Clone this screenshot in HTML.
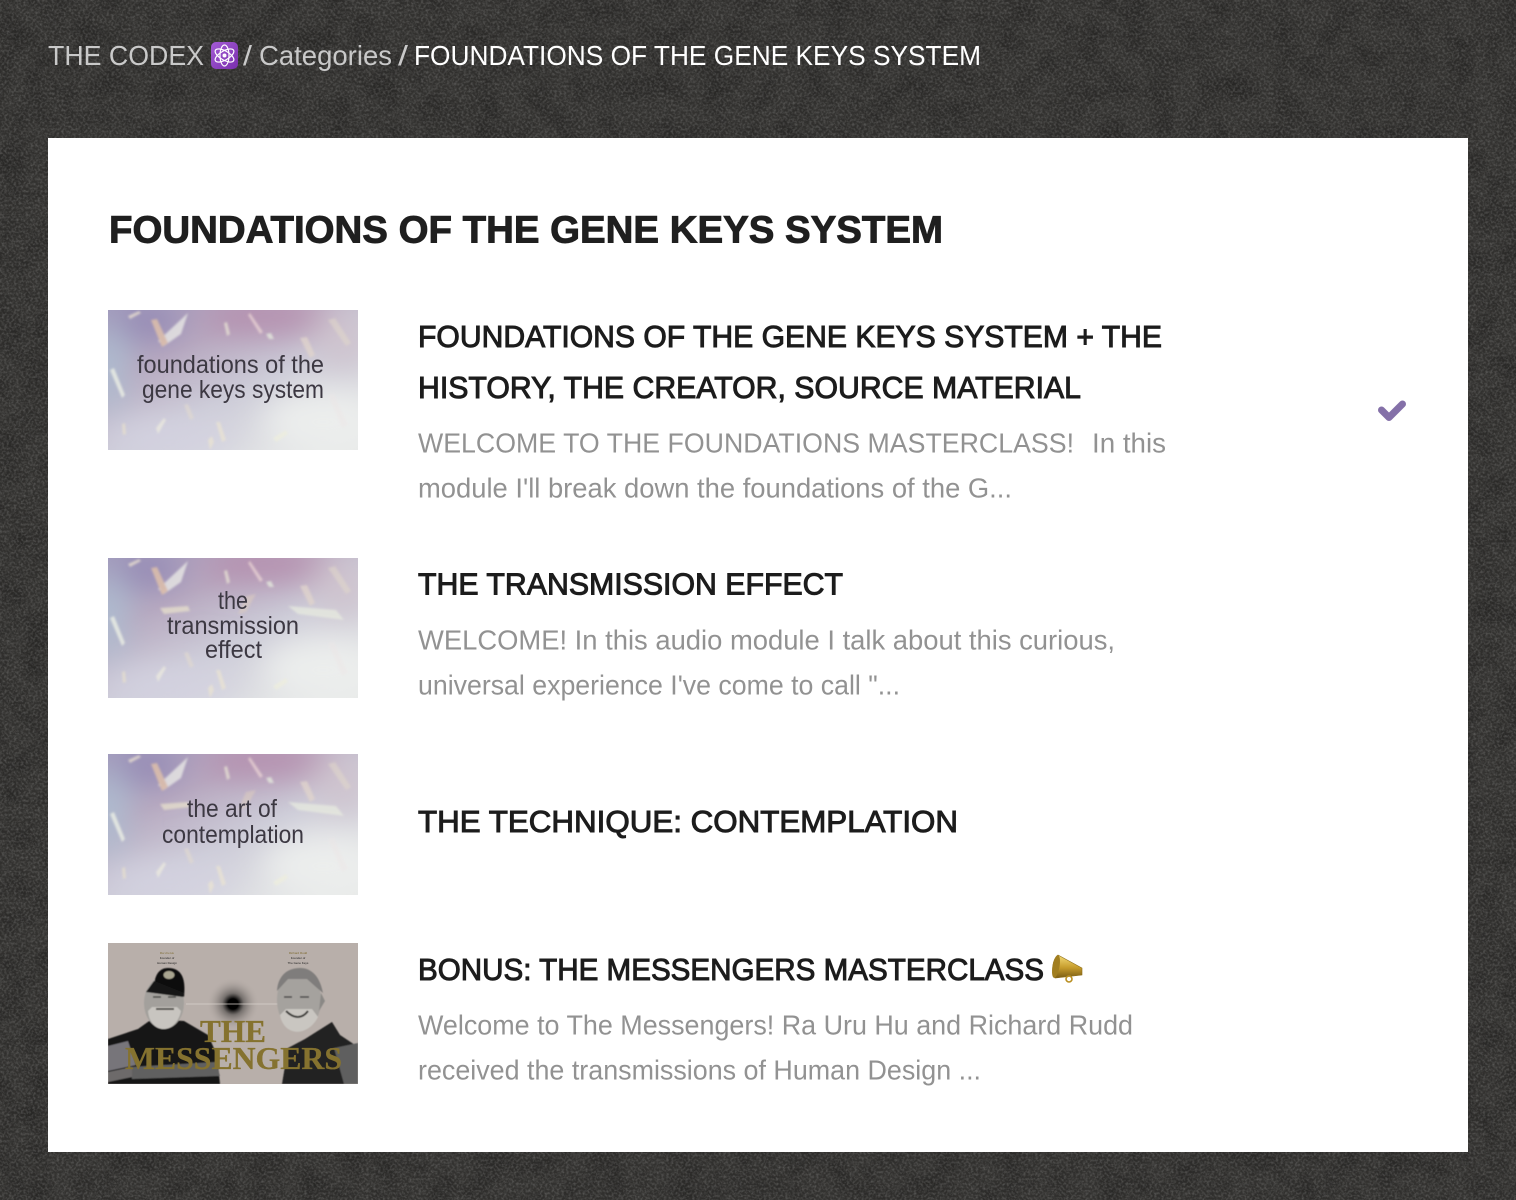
<!DOCTYPE html>
<html lang="en"><head><meta charset="utf-8"><title>FOUNDATIONS OF THE GENE KEYS SYSTEM</title>
<style>
html,body{margin:0;padding:0;width:1516px;height:1200px;overflow:hidden;background:#383735}
svg{display:block}
text{font-family:"Liberation Sans",sans-serif}
.bc{font-size:28px;fill:#c9c9c9}
.bw{font-size:28px;fill:#fff}
.h{font-size:38px;font-weight:700;fill:#1f1f1f;stroke:#1f1f1f;stroke-width:.9px}
.t{font-size:31px;fill:#1c1c1c;stroke:#1c1c1c;stroke-width:1px}
.d{font-size:28px;fill:#929292}
.tt{font-size:25px;fill:#3c3842}
.g{font-family:"Liberation Serif",serif;font-weight:700;fill:#85722f;stroke:#85722f;stroke-width:.3px}
</style></head><body>
<svg xmlns="http://www.w3.org/2000/svg" width="1516" height="1200" viewBox="0 0 1516 1200">
<defs>
<filter id="noise" x="0" y="0" width="100%" height="100%">
<feTurbulence type="fractalNoise" baseFrequency="0.42" numOctaves="2" seed="7"/>
<feColorMatrix type="matrix" values="0 0 0 0 .5  0 0 0 0 .5  0 0 0 0 .49  1.1 0 0 0 -.42"/>
</filter>
<filter id="dark" x="0" y="0" width="100%" height="100%">
<feTurbulence type="fractalNoise" baseFrequency="0.04" numOctaves="2" seed="3"/>
<feColorMatrix type="matrix" values="0 0 0 0 0  0 0 0 0 0  0 0 0 0 0  1.3 0 0 0 -.5"/>
</filter>
<filter id="b2"><feGaussianBlur stdDeviation="1.1"/></filter>
<filter id="b4"><feGaussianBlur stdDeviation=".5"/></filter>
<filter id="b3"><feGaussianBlur stdDeviation="16"/></filter>
<linearGradient id="tg" x1="0" y1="0" x2=".85" y2="1">
<stop offset="0" stop-color="#a49dbd"/><stop offset=".3" stop-color="#b7a9c0"/><stop offset=".6" stop-color="#cdccd8"/><stop offset="1" stop-color="#e7e9e8"/>
</linearGradient>
<linearGradient id="pu" x1="0" y1="0" x2="1" y2="1"><stop offset="0" stop-color="#a45bd6"/><stop offset="1" stop-color="#7a2fae"/></linearGradient>
<linearGradient id="mg" x1="0" y1="0" x2="0" y2="1"><stop offset="0" stop-color="#f4dc78"/><stop offset=".55" stop-color="#c69c2c"/><stop offset="1" stop-color="#7a5c14"/></linearGradient>
<radialGradient id="halo"><stop offset="0" stop-color="#000"/><stop offset=".2" stop-color="#000"/><stop offset=".42" stop-color="#5a5654" stop-opacity=".7"/><stop offset="1" stop-color="#b3aaa5" stop-opacity="0"/></radialGradient>
<g id="thumb">
<rect width="250" height="141" fill="url(#tg)"/>
<g filter="url(#b3)">
<ellipse cx="160" cy="6" rx="70" ry="18" fill="#b58fae"/>
<ellipse cx="40" cy="12" rx="35" ry="18" fill="#9489b4"/>
<ellipse cx="0" cy="60" rx="18" ry="45" fill="#aebfd2"/>
<ellipse cx="215" cy="112" rx="60" ry="32" fill="#eceeed"/>
<ellipse cx="60" cy="128" rx="70" ry="18" fill="#d3d1e0"/>
<ellipse cx="235" cy="30" rx="30" ry="30" fill="#cfc4cf"/>
</g>
<g filter="url(#b2)" opacity=".72">
<path d="M50 31L80 3L73 24L56 36Z" fill="#f0f1ea"/>
<path d="M43 10L49 9L60 33L54 37Z" fill="#e9c7a8"/>
<path d="M20 6L31 1L33 3L22 9Z" fill="#eee4d2"/>
<path d="M116 13L119 12L122 24L119 26Z" fill="#eae6d6"/>
<path d="M140 5L142 3L155 22L152 24Z" fill="#ecd6d6"/>
<path d="M158 24L163 23L166 29L161 29Z" fill="#e8efe0"/>
<path d="M192 28L199 27L207 45L202 48Z" fill="#e2d6cc"/>
<path d="M220 10L227 8L243 33L238 36Z" fill="#e2dacb" opacity=".7"/>
<path d="M2 60L6 58L17 85L14 88Z" fill="#f3f6e8"/>
<path d="M14 114L17 113L18 124L15 125Z" fill="#e8e0cc"/>
<path d="M48 118L56 108L58 110L50 124Z" fill="#eeecdf"/>
<path d="M76 95L80 94L86 108L82 110Z" fill="#dfd8d0"/>
<path d="M108 112L112 112L118 130L114 132Z" fill="#ebe4d2"/>
<path d="M165 128L178 120L180 124L168 132Z" fill="#eeeedd"/>
<path d="M100 130L104 126L106 132L102 140Z" fill="#ebe4d2"/>
<path d="M220 85L226 84L240 115L234 118Z" fill="#ece6e6" opacity=".6"/>
</g>
</g>
<g id="streak2" filter="url(#b2)" opacity=".72">
<path d="M52 50L80 48L82 53L56 56Z" fill="#e9e2cc"/>
<path d="M180 48L228 52L236 62L190 56Z" fill="#e8ece0"/>
<path d="M138 38L148 36L138 54L130 56Z" fill="#e0cfbe" opacity=".7"/>
</g>
</defs>

<rect width="1516" height="1200" fill="#333230"/>
<rect width="1516" height="1200" filter="url(#dark)" opacity=".35"/>
<rect width="1516" height="1200" filter="url(#noise)" opacity=".5"/>

<text class="bc" x="48" y="65" textLength="156" lengthAdjust="spacingAndGlyphs">THE CODEX</text>
<rect x="211" y="42" width="27" height="27" rx="5" fill="url(#pu)"/>
<g fill="none" stroke="#fff" stroke-width="1.2">
<ellipse cx="224.5" cy="55.5" rx="4.500" ry="10.500"/>
<ellipse cx="224.5" cy="55.5" rx="4.500" ry="10.500" transform="rotate(60 224.5 55.5)"/>
<ellipse cx="224.5" cy="55.5" rx="4.500" ry="10.500" transform="rotate(120 224.5 55.5)"/>
</g>
<circle cx="224.5" cy="55.5" r="2" fill="#fff"/>
<text class="bc" x="243" y="65" textLength="9" lengthAdjust="spacingAndGlyphs">/</text>
<text class="bc" x="259" y="65" textLength="133" lengthAdjust="spacingAndGlyphs">Categories</text>
<text class="bc" x="398" y="65" textLength="10" lengthAdjust="spacingAndGlyphs">/</text>
<text class="bw" x="414" y="65" textLength="567" lengthAdjust="spacingAndGlyphs">FOUNDATIONS OF THE GENE KEYS SYSTEM</text>

<rect x="48" y="138" width="1420" height="1014" fill="#fff"/>

<text class="h" x="109" y="242.500" textLength="834" lengthAdjust="spacingAndGlyphs">FOUNDATIONS OF THE GENE KEYS SYSTEM</text>

<!-- item 1 -->
<svg x="108" y="310" width="250" height="140" viewBox="0 0 250 140">
<use href="#thumb"/>
<text class="tt" x="29" y="63" textLength="187" lengthAdjust="spacingAndGlyphs">foundations of the</text>
<text class="tt" x="34" y="88" textLength="182" lengthAdjust="spacingAndGlyphs">gene keys system</text>
</svg>
<text class="t" x="418" y="347" textLength="744" lengthAdjust="spacingAndGlyphs">FOUNDATIONS OF THE GENE KEYS SYSTEM + THE</text>
<text class="t" x="418" y="398" textLength="663" lengthAdjust="spacingAndGlyphs">HISTORY, THE CREATOR, SOURCE MATERIAL</text>
<text class="d" x="418" y="452.500" textLength="656" lengthAdjust="spacingAndGlyphs">WELCOME TO THE FOUNDATIONS MASTERCLASS!</text>
<text class="d" x="1092" y="452.500" textLength="74" lengthAdjust="spacingAndGlyphs">In this</text>
<text class="d" x="418" y="497.500" textLength="594" lengthAdjust="spacingAndGlyphs">module I'll break down the foundations of the G...</text>
<path d="M1381.500 410L1389 417.500L1402.500 404" fill="none" stroke="#8470a8" stroke-width="7" stroke-linecap="round" stroke-linejoin="round"/>

<!-- item 2 -->
<svg x="108" y="558" width="250" height="140" viewBox="0 0 250 140">
<use href="#thumb"/>
<use href="#streak2"/>
<text class="tt" x="110" y="51" textLength="30" lengthAdjust="spacingAndGlyphs">the</text>
<text class="tt" x="59" y="76" textLength="132" lengthAdjust="spacingAndGlyphs">transmission</text>
<text class="tt" x="97" y="100" textLength="57" lengthAdjust="spacingAndGlyphs">effect</text>
</svg>
<text class="t" x="418" y="594.500" textLength="425" lengthAdjust="spacingAndGlyphs">THE TRANSMISSION EFFECT</text>
<text class="d" x="418" y="649.500" textLength="697" lengthAdjust="spacingAndGlyphs">WELCOME! In this audio module I talk about this curious,</text>
<text class="d" x="418" y="694.500" textLength="482" lengthAdjust="spacingAndGlyphs">universal experience I've come to call "...</text>

<!-- item 3 -->
<svg x="108" y="754" width="250" height="141" viewBox="0 0 250 141">
<use href="#thumb"/>
<use href="#streak2"/>
<text class="tt" x="79" y="63" textLength="90" lengthAdjust="spacingAndGlyphs">the art of</text>
<text class="tt" x="54" y="89" textLength="142" lengthAdjust="spacingAndGlyphs">contemplation</text>
</svg>
<text class="t" x="418" y="832" textLength="540" lengthAdjust="spacingAndGlyphs">THE TECHNIQUE: CONTEMPLATION</text>

<!-- item 4 -->
<svg x="108" y="943" width="250" height="141" viewBox="0 0 250 141">
<rect width="250" height="141" fill="#b8afaa"/>
<circle cx="125" cy="61" r="26" fill="url(#halo)"/>
<path d="M78 61H172" stroke="#d8d2cc" stroke-width=".7"/>
<g filter="url(#b4)">
<path d="M0 96L30 86L44 76L76 78L100 92L109 112L112 141H0Z" fill="#161616"/>
<path d="M0 103L20 98L28 122L0 128Z" fill="#77757a"/>
<path d="M22 124L108 119L112 133L24 136Z" fill="#606060"/>
<path d="M0 129L24 124V134L0 139Z" fill="#6d6b6b"/>
<ellipse cx="56" cy="60" rx="20" ry="26" fill="#a3a09c"/>
<path d="M40 68C42 92 68 92 73 68L69 64H44Z" fill="#c8c5c0"/>
<path d="M48 66H66" stroke="#55524f" stroke-width="2"/>
<path d="M45 54H53M60 54H68" stroke="#4a4846" stroke-width="1.500"/>
<path d="M46 46C46 34 50 25 60 25C74 25 78 36 76 54L58 44Z" fill="#101010"/>
<path d="M38 49L46 38L76 50L75 54Z" fill="#181818"/>
<ellipse cx="61" cy="32" rx="5.500" ry="4" fill="#a8a48f"/>
<path d="M174 141L180 105L197 96L224 79L232 92L250 104V141Z" fill="#202020"/>
<path d="M226 105L250 100V141H236Z" fill="#5f5f5f"/>
<ellipse cx="191" cy="57" rx="22" ry="31" fill="#a5a29e"/>
<path d="M169 48C170 32 180 25 192 25C204 25 212 34 215 50L208 44L199 36H180Z" fill="#7f7d7b"/>
<path d="M172 72C176 94 200 94 210 74L204 66L178 66Z" fill="#c9c6c1"/>
<path d="M178 68C186 76 194 76 200 68" fill="none" stroke="#3e3c3a" stroke-width="2"/>
<path d="M176 54H184M192 54H201" stroke="#4a4846" stroke-width="1.500"/>
<path d="M213 50L217 58L211 68Z" fill="#8a8885"/>
</g>
<text class="g" x="92" y="99" font-size="32" textLength="66" lengthAdjust="spacingAndGlyphs">THE</text>
<text class="g" x="17" y="126" font-size="32" textLength="217" lengthAdjust="spacingAndGlyphs">MESSENGERS</text>
<g font-size="3" text-anchor="middle">
<text x="59" y="11" fill="#7f6c32">Ra Uru Hu</text>
<text x="59" y="16" fill="#222">Founder of</text>
<text x="59" y="21" fill="#222">Human Design</text>
<text x="190" y="11" fill="#7f6c32">Richard Rudd</text>
<text x="190" y="16" fill="#222">Founder of</text>
<text x="190" y="21" fill="#222">The Gene Keys</text>
</g>
</svg>
<text class="t" x="418" y="980" textLength="626" lengthAdjust="spacingAndGlyphs">BONUS: THE MESSENGERS MASTERCLASS</text>
<path d="M1058 955L1082 968L1082 975L1055 978C1051 972 1052 960 1058 955Z" fill="url(#mg)" stroke="#8a6a16" stroke-width=".6"/>
<ellipse cx="1056" cy="966.500" rx="3.500" ry="11.500" transform="rotate(10 1056 966.5)" fill="#a17e20"/>
<circle cx="1069" cy="979" r="3" fill="none" stroke="#b98f22" stroke-width="1.600"/>
<text class="d" x="418" y="1034.500" textLength="715" lengthAdjust="spacingAndGlyphs">Welcome to The Messengers! Ra Uru Hu and Richard Rudd</text>
<text class="d" x="418" y="1079.500" textLength="563" lengthAdjust="spacingAndGlyphs">received the transmissions of Human Design ...</text>
</svg>
</body></html>
